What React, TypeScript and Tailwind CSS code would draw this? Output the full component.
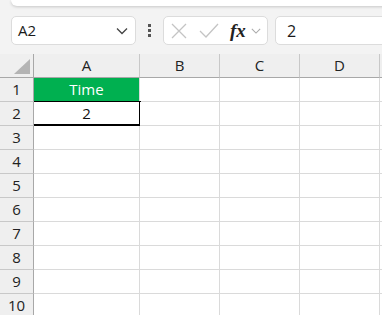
import React from 'react';

const cols = ['A', 'B', 'C', 'D', 'E'];
const rows = [1, 2, 3, 4, 5, 6, 7, 8, 9, 10, 11];

const Chevron = ({ className }: { className?: string }) => (
  <svg width="12" height="8" viewBox="0 0 12 8" fill="none" className={className}>
    <path d="M1 1.5 L6 6.5 L11 1.5" stroke="currentColor" strokeWidth="1.3" />
  </svg>
);

export default function App() {
  return (
    <div
      className="w-[382px] h-[315px] overflow-hidden bg-[#f3f3f3] text-[#1a1a1a]"
      style={{ fontFamily: '"Segoe UI", "Open Sans", "Noto Sans", sans-serif' }}
    >
      {/* ribbon edge */}
      <div className="ml-[11px] -mr-4 h-[6px] bg-white rounded-bl-[8px] shadow-[0_1px_3px_rgba(0,0,0,0.18)]" />

      {/* formula bar */}
      <div className="flex items-center mt-[10px] h-[29px] pl-[11px]">
        <div className="w-[125px] h-full bg-white border border-[#dcdcdc] rounded-[5px] flex items-center justify-between pl-[6px] pr-[7px]">
          <span className="text-[15px] leading-none">A2</span>
          <Chevron className="text-[#444]" />
        </div>
        <div className="w-[27px] flex flex-col items-center gap-[2px]">
          <div className="w-[3px] h-[3px] bg-[#555]" />
          <div className="w-[3px] h-[3px] bg-[#555]" />
          <div className="w-[3px] h-[3px] bg-[#555]" />
        </div>
        <div className="w-[105px] h-full bg-white border border-[#dcdcdc] rounded-[5px] flex items-center pl-[7px]">
          <svg width="16" height="16" viewBox="0 0 16 16" fill="none">
            <path d="M1 1 L15 15 M15 1 L1 15" stroke="#c4c4c4" strokeWidth="1.3" />
          </svg>
          <svg width="20" height="16" viewBox="0 0 20 16" fill="none" className="ml-[12px]">
            <path d="M1 8 L7 14 L19 1" stroke="#c4c4c4" strokeWidth="1.3" />
          </svg>
          <span
            className="ml-[11px] text-[19px] italic font-bold leading-none text-[#222]"
            style={{ fontFamily: '"Liberation Serif", serif' }}
          >
            fx
          </span>
          <Chevron className="ml-[5px] text-[#aaa] w-[10px]" />
        </div>
        <div className="ml-[7px] flex-1 -mr-4 h-full bg-white border border-[#dcdcdc] rounded-[5px] flex items-center pl-[11px]">
          <span className="text-[16px] leading-none">2</span>
        </div>
      </div>

      {/* grid */}
      <div className="mt-[9px] grid grid-cols-[34px_106px_80px_80px_80px_80px]">
        <div className="h-[24px] bg-[#efefef] border-r border-b border-[#a8a8a8] relative">
          <svg width="16" height="15" viewBox="0 0 16 15" className="absolute right-[3px] bottom-[3px]">
            <path d="M16 0 L16 15 L0 15 Z" fill="#b4b4b4" />
          </svg>
        </div>
        {cols.map((c) => (
          <div
            key={c}
            className="h-[24px] bg-[#efefef] border-r border-r-[#c8c8c8] border-b border-b-[#a8a8a8] flex items-center justify-center text-[15px] text-[#222]"
          >
            {c === 'E' ? '' : c}
          </div>
        ))}
        {rows.map((r) => (
          <React.Fragment key={r}>
            <div className="h-[24px] bg-[#efefef] border-r border-r-[#a8a8a8] border-b border-b-[#c8c8c8] flex items-center justify-center text-[15px] text-[#222]">
              {r}
            </div>
            {cols.map((c) => {
              const a1 = r === 1 && c === 'A';
              const a2 = r === 2 && c === 'A';
              return (
                <div
                  key={c}
                  className={`h-[24px] border-r border-b flex items-center justify-center text-[15px] ${
                    a1
                      ? 'bg-[#00b050] text-white border-r-[#dadada] border-b-black'
                      : a2
                      ? 'bg-white text-[#111] border-r-2 border-b-2 border-black shadow-[0_-1px_0_#000] -mr-px'
                      : 'bg-white border-[#dadada]'
                  }`}
                >
                  {a1 ? 'Time' : a2 ? '2' : ''}
                </div>
              );
            })}
          </React.Fragment>
        ))}
      </div>
    </div>
  );
}
